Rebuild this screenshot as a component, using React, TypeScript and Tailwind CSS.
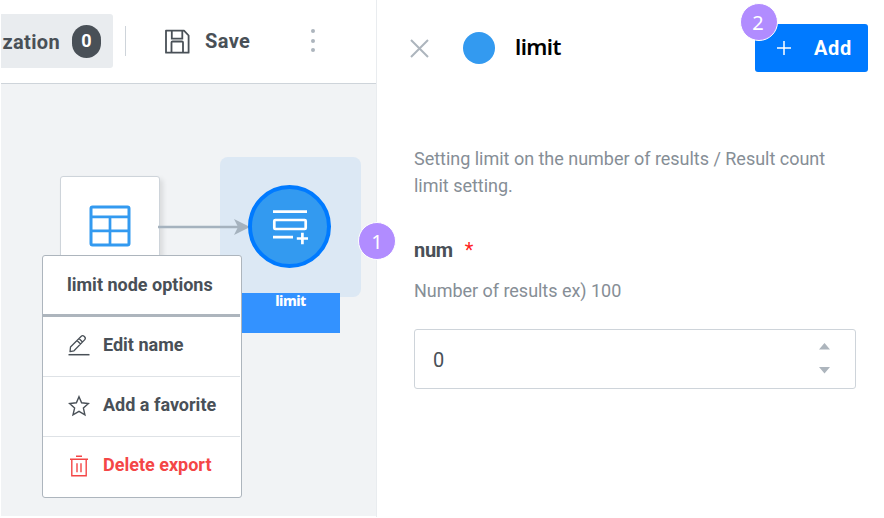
import React from "react";

function Toolbar() {
  return (
    <header className="flex h-[84px] shrink-0 items-start border-b border-[#ced4da] bg-white">
      <div className="mt-[14px] flex h-[54px] w-28 items-center justify-end gap-3 overflow-hidden rounded-r-[3px] bg-[#e9ecef] pr-3">
        <span className="pt-px text-xl font-bold leading-6 tracking-[0.35px] text-[#495057]">zation</span>
        <span className="flex h-[33px] w-[29px] items-center justify-center rounded-full bg-[#495057] text-lg font-bold text-white">
          0
        </span>
      </div>
      <div className="ml-3 mt-[26px] h-[30px] w-px bg-[#ced4da]" />
      <button className="ml-[39px] mt-[26px] flex h-[30px] items-center">
        <svg width="25" height="25" viewBox="0 0 25 25" fill="none" stroke="#495057" strokeWidth="1.8">
          <path d="M1 1.6h18l4.6 4.9V23.7H1z" strokeLinejoin="round" />
          <path d="M6.8 1.6v8h10.5v-8M6.5 23.7v-10.2q0-1 1-1h9.5q1 0 1 1v10.2" />
        </svg>
        <span className="ml-[15px] text-xl font-bold leading-6 tracking-[0.4px] text-[#495057]">Save</span>
      </button>
      <div className="ml-[61px] mt-[29px] flex flex-col gap-[5.5px]">
        <i className="size-1 rounded-full bg-[#adb5bd]" />
        <i className="size-1 rounded-full bg-[#adb5bd]" />
        <i className="size-1 rounded-full bg-[#adb5bd]" />
      </div>
    </header>
  );
}

function ContextMenu() {
  return (
    <div className="absolute left-[41px] top-[171px] flex h-[243px] w-[200px] flex-col rounded-[3px] border border-[#adb5bd] bg-white pr-px text-lg font-bold leading-6 text-[#495057]">
      <div className="flex h-[61px] items-center border-b-[3px] border-[#adb5bd] pl-6 text-[18px]">
        limit node options
      </div>
      <button className="flex h-[60px] items-center border-b border-[#dee2e6] pl-[25px] pb-[3px]">
        <svg width="22" height="22" viewBox="0 0 22 22" fill="none" stroke="#495057" strokeWidth="1.3">
          <path d="M2 17.7 2.5 13 13.3 2.2c1.8-1.7 5.2 1.6 3.5 3.4L6 16.8zM11 4.5l3.7 3.7M9 6.5l3.6 3.5" strokeLinejoin="round" />
          <path d="M.5 20.7h21" strokeWidth="1.5" />
        </svg>
        <span className="ml-[13px]">Edit name</span>
      </button>
      <button className="flex h-[60px] items-center border-b border-[#dee2e6] pl-[25px] pb-[3px]">
        <svg className="mt-0.5" width="22" height="22" viewBox="0 0 22 22" fill="none" stroke="#495057" strokeWidth="1.4">
          <path d="m11 1.7 2.6 6.1 6.8.8-5 4.5 1.5 6.8-5.9-3.5L5 19.9l1.6-6.8-5-4.5 6.8-.8z" />
        </svg>
        <span className="ml-[13px]">Add a favorite</span>
      </button>
      <button className="flex h-[58px] items-center pl-[25px] pb-0.5 text-[#f44646]">
        <svg className="mt-0.5" width="22" height="22" viewBox="0 0 22 22" fill="none" stroke="currentColor" strokeWidth="1.4">
          <path d="M2 4.2h18M8 1.2h6M3.8 4.2v16.5h14.4V4.2M9 8.2v9M13 8.2v9" />
        </svg>
        <span className="ml-[13px]">Delete export</span>
      </button>
    </div>
  );
}

function NodeCanvas() {
  return (
    <main className="relative flex-1 border-b border-white bg-[#f1f3f5]">
      <div className="absolute left-[58.5px] top-[92px] flex h-[101px] w-[100px] justify-center rounded-[3px] border border-[#ced4da] bg-white pl-px pt-7 shadow-[3px_3px_5px_rgba(0,0,0,0.1)]">
        <svg width="42" height="42" viewBox="0 0 42 42" fill="none" stroke="#339af0" strokeWidth="3">
          <rect x="2" y="2" width="38" height="38" rx="1.5" />
          <path d="M2 11.8h38M2 25.8h38M21 11.8v28" strokeWidth="2.7" />
        </svg>
      </div>
      <div className="absolute left-[219px] top-[73px] h-[140px] w-[141px] rounded-lg bg-[#dce8f4]" />
      <svg className="absolute left-[157px] top-[133px]" width="92" height="20" viewBox="0 0 92 20">
        <path d="M0 10h82" stroke="#a5b2be" strokeWidth="2.3" />
        <path d="m76 2 16 8-16 8 4-8z" fill="#a5b2be" />
      </svg>
      <div className="absolute left-[247px] top-[101px] flex size-[83px] items-center justify-center rounded-full border-4 border-[#007aff] bg-[#339af0] pl-0.5 pt-0.5">
        <svg width="37" height="35" viewBox="0 0 37 35" fill="none" stroke="white" strokeWidth="2.7">
          <path d="M1 1.7h34M1 27.2h20M24.8 28.5H36M30.4 22.7v11.6" />
          <rect x="2.3" y="10" width="31.4" height="9" rx="1" />
        </svg>
      </div>
      <div className="absolute left-[240px] top-[209px] h-10 w-[99px] bg-[#3392ff] text-center font-['Noto_Sans',sans-serif] text-sm font-extrabold leading-4 tracking-[-0.5px] text-white">
        limit
      </div>
      <ContextMenu />
    </main>
  );
}

function SettingsPanel() {
  return (
    <aside className="flex flex-1 flex-col bg-white pl-[37px] pr-7">
      <div className="-ml-1 -mr-3 flex h-24 items-center">
        <svg width="19" height="19" viewBox="0 0 19 19" fill="none" stroke="#adb5bd" strokeWidth="2">
          <path d="m1 1 17 17M18 1 1 18" />
        </svg>
        <span className="ml-[34px] size-8 rounded-full bg-[#339af0]" />
        <h1 className="-mt-[3px] ml-[20px] font-['Noto_Sans',sans-serif] text-[22px] font-semibold tracking-[-0.6px] text-black">limit</h1>
        <button className="ml-auto flex h-12 w-[113px] items-center rounded-[3px] bg-[#007aff] pl-[22px] text-white">
          <svg width="14" height="14" viewBox="0 0 14 14" stroke="white" strokeWidth="1.5">
            <path d="M0 7h14M7 0v14" />
          </svg>
          <span className="ml-[23px] text-xl font-bold tracking-[0.6px]">Add</span>
        </button>
      </div>
      <p className="mt-[49px] text-lg leading-[27px] tracking-[-0.02px] text-[#868e96]">
        Setting limit on the number of results / Result count
        <br />
        limit setting.
      </p>
      <label className="mt-[39px] flex gap-3 text-xl font-bold leading-6 tracking-[-0.3px] text-[#495057]">
        num <span className="font-normal text-[#ff1f1f]">*</span>
      </label>
      <p className="mt-[15px] text-lg leading-[27px] tracking-[-0.03px] text-[#868e96]">Number of results ex) 100</p>
      <div className="mt-[25px] flex h-[60px] items-center justify-between rounded-[3px] border border-[#ced4da] pl-[18px] pr-[25px]">
        <span className="pt-0.5 text-xl text-[#495057]">0</span>
        <svg className="-mt-[3px]" width="11" height="32" viewBox="0 0 11 32" fill="#adb5bd">
          <path d="M0 7.5 5.5 1 11 7.5zM0 25h11l-5.5 6.5z" />
        </svg>
      </div>
    </aside>
  );
}

export default function App() {
  return (
    <div className="relative flex h-[518px] w-[884px] overflow-hidden bg-white font-[Roboto,sans-serif]">
      <section className="mb-px ml-px flex w-[376px] flex-col border-r border-[#e9ecef]">
        <Toolbar />
        <NodeCanvas />
      </section>
      <SettingsPanel />
      <span className="absolute left-[358px] top-[222px] flex size-[38px] items-center justify-center rounded-full border border-white bg-[#b18cff] pt-0.5 font-['Noto_Sans',sans-serif] text-xl text-white">
        1
      </span>
      <span className="absolute left-[740px] top-[3px] flex size-[38px] items-center justify-center rounded-full border border-white bg-[#b18cff] pr-0.5 pt-0.5 font-['Noto_Sans',sans-serif] text-xl text-white">
        2
      </span>
    </div>
  );
}
